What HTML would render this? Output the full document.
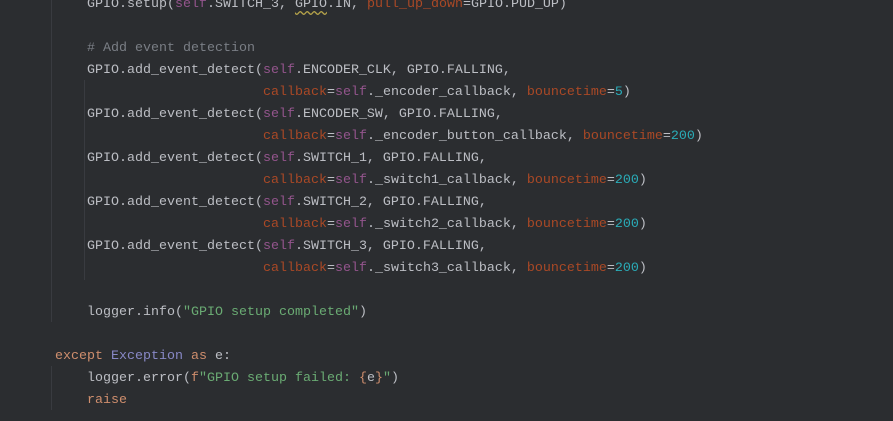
<!DOCTYPE html>
<html><head><style>
html,body{margin:0;padding:0;background:#2b2d30;width:893px;height:421px;overflow:hidden}
pre{position:absolute;left:55px;top:-6px;margin:0;font-family:"Liberation Mono","DejaVu Sans Mono",monospace;font-size:13.33px;line-height:22px;color:#bcbec4}
.k{color:#cf8e6d}.s{color:#94558d}.a{color:#aa4926}.n{color:#2aacb8}.g{color:#6aab73}.c{color:#7a7e85}.e{color:#8888c6}
.w{text-decoration:underline wavy #b5a34a;text-underline-offset:3px}
.gd{position:absolute;width:1px;background:#393b40}
</style></head><body>
<div class="gd" style="left:51px;top:0;height:322px"></div>
<div class="gd" style="left:84px;top:80px;height:200px"></div>
<div class="gd" style="left:51px;top:366px;height:44px"></div>
<pre>    GPIO.setup(<span class="s">self</span>.SWITCH_3, <span class="w">GPIO</span>.IN, <span class="a">pull_up_down</span>=GPIO.PUD_UP)

    <span class="c"># Add event detection</span>
    GPIO.add_event_detect(<span class="s">self</span>.ENCODER_CLK, GPIO.FALLING,
                          <span class="a">callback</span>=<span class="s">self</span>._encoder_callback, <span class="a">bouncetime</span>=<span class="n">5</span>)
    GPIO.add_event_detect(<span class="s">self</span>.ENCODER_SW, GPIO.FALLING,
                          <span class="a">callback</span>=<span class="s">self</span>._encoder_button_callback, <span class="a">bouncetime</span>=<span class="n">200</span>)
    GPIO.add_event_detect(<span class="s">self</span>.SWITCH_1, GPIO.FALLING,
                          <span class="a">callback</span>=<span class="s">self</span>._switch1_callback, <span class="a">bouncetime</span>=<span class="n">200</span>)
    GPIO.add_event_detect(<span class="s">self</span>.SWITCH_2, GPIO.FALLING,
                          <span class="a">callback</span>=<span class="s">self</span>._switch2_callback, <span class="a">bouncetime</span>=<span class="n">200</span>)
    GPIO.add_event_detect(<span class="s">self</span>.SWITCH_3, GPIO.FALLING,
                          <span class="a">callback</span>=<span class="s">self</span>._switch3_callback, <span class="a">bouncetime</span>=<span class="n">200</span>)

    logger.info(<span class="g">"GPIO setup completed"</span>)

<span class="k">except</span> <span class="e">Exception</span> <span class="k">as</span> e:
    logger.error(<span class="k">f</span><span class="g">"GPIO setup failed: </span><span class="k">{</span>e<span class="k">}</span><span class="g">"</span>)
    <span class="k">raise</span>
</pre>
</body></html>
